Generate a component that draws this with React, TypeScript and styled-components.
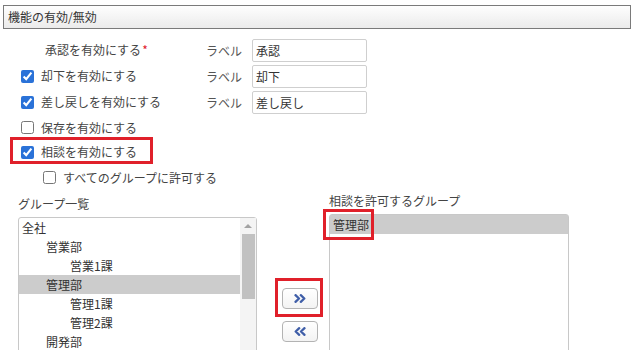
import React from 'react';
import styled, { createGlobalStyle } from 'styled-components';

const GlobalStyle = createGlobalStyle`
  html, body {
    margin: 0;
    padding: 0;
    overflow: hidden;
    background: #fff;
  }
  body {
    font-family: "Noto Sans CJK JP", "Noto Sans", sans-serif;
    font-size: 12px;
    color: #333;
  }
`;

const Page = styled.div`
  padding: 5px 1px 0 3px;
`;

const SectionHeader = styled.div`
  height: 24px;
  box-sizing: border-box;
  border: 1px solid #7a7a7a;
  background: linear-gradient(#fefefe, #ebebeb);
  padding-left: 4px;
  line-height: 22px;
  color: #333;
`;

const Form = styled.div`
  margin-top: 8px;
`;

const Row = styled.div<{ $h: number }>`
  display: flex;
  align-items: center;
  height: ${({ $h }) => $h}px;
`;

const Lead = styled.label<{ $pad: number; $wide?: boolean }>`
  display: flex;
  align-items: center;
  gap: 7px;
  width: ${({ $wide }) => ($wide ? 'auto' : '203px')};
  box-sizing: border-box;
  padding-left: ${({ $pad }) => $pad}px;
  line-height: 16px;
  color: #444;
`;

const Required = styled.span`
  color: #e0202a;
  margin-left: 1px;
`;

const Check = styled.input.attrs({ type: 'checkbox' })`
  margin: 0;
  width: 13px;
  height: 13px;
  accent-color: #2a72d8;
`;

const FieldLabel = styled.span`
  width: 46px;
  color: #555;
`;

const TextInput = styled.input`
  width: 115px;
  height: 23px;
  box-sizing: border-box;
  border: 1px solid #cfcfcf;
  border-radius: 2px;
  padding: 0 3px;
  font: inherit;
  color: #333;
  outline: none;
`;

const RowMark = styled.span`
  display: inline-flex;
  align-items: center;
  gap: 7px;
  height: 27px;
  box-sizing: border-box;
  border: 3px solid #e0202a;
  padding: 4px 13px 0 8px;
  margin: -3px 0 2px 7px;
  line-height: 16px;
  color: #444;
`;

const Groups = styled.div`
  display: grid;
  grid-template-columns: 239px 72px 240px;
  margin-top: 5px;
  padding-left: 15px;
`;

const Column = styled.div<{ $shift?: number }>`
  display: flex;
  flex-direction: column;
  margin-top: ${({ $shift }) => $shift ?? 0}px;
`;

const ColumnTitle = styled.div`
  line-height: 18px;
  height: 18px;
  margin-bottom: 4px;
  color: #444;
`;

const ListBox = styled.div<{ $scroll?: boolean }>`
  display: grid;
  grid-template-columns: ${({ $scroll }) => ($scroll ? '1fr 16px' : '1fr')};
  height: 150px;
  border: 1px solid #c8c8c8;
  border-radius: 3px 3px 0 0;
  background: #fff;
`;

const Items = styled.div`
  display: flex;
  flex-direction: column;
`;

const Item = styled.div<{ $level?: number; $selected?: boolean }>`
  height: 19px;
  line-height: 19px;
  padding-left: ${({ $level }) => 3 + ($level ?? 0) * 24}px;
  background: ${({ $selected }) => ($selected ? '#cccccc' : 'transparent')};
  color: #333;
  white-space: nowrap;
`;

const ItemMark = styled.span`
  display: inline-block;
  outline: 3px solid #e0202a;
  padding: 3px 2px 3px 7px;
  margin: -3px -2px -3px -7px;
  line-height: 19px;
`;

const ScrollBar = styled.div`
  display: flex;
  flex-direction: column;
  align-items: center;
  background: #f4f4f4;
`;

const ScrollArrow = styled.div`
  height: 16px;
  width: 100%;
  display: flex;
  align-items: center;
  justify-content: center;
  &::before {
    content: '';
    border-left: 4px solid transparent;
    border-right: 4px solid transparent;
    border-bottom: 4px solid #a3a3a3;
  }
`;

const ScrollThumb = styled.div`
  width: 13px;
  height: 65px;
  background: #c1c1c1;
`;

const Mover = styled.div`
  display: flex;
  flex-direction: column;
  align-items: flex-start;
  padding: 83px 0 0 18px;
`;

const ButtonMark = styled.span`
  display: inline-block;
  border: 3px solid #e0202a;
  padding: 7px 2px 5px 4px;
`;

const ArrowButton = styled.button<{ $gap?: number }>`
  display: flex;
  align-items: center;
  justify-content: center;
  width: 36px;
  height: 21px;
  margin: ${({ $gap }) => ($gap ? `${$gap}px 0 0 7px` : '0')};
  padding: 0;
  box-sizing: border-box;
  border: 1px solid #b3b3b3;
  border-radius: 4px;
  background: linear-gradient(#ffffff, #f3f3f3);
`;

const Chevrons = ({ left }: { left?: boolean }) => (
  <svg width="12" height="9" viewBox="0 0 12 9" style={{ transform: left ? 'scaleX(-1)' : undefined }}>
    <path
      d="M1.5 1.2 L5 4.5 L1.5 7.8 M6.8 1.2 L10.3 4.5 L6.8 7.8"
      fill="none"
      stroke="#3f5ea8"
      strokeWidth="2.3"
      strokeLinecap="round"
      strokeLinejoin="round"
    />
  </svg>
);

const groups = [
  { name: '全社', level: 0 },
  { name: '営業部', level: 1 },
  { name: '営業1課', level: 2 },
  { name: '管理部', level: 1, selected: true },
  { name: '管理1課', level: 2 },
  { name: '管理2課', level: 2 },
  { name: '開発部', level: 1 },
];

const options = [
  { title: '却下を有効にする', label: '却下' },
  { title: '差し戻しを有効にする', label: '差し戻し' },
];

export default function App() {
  return (
    <React.Fragment>
      <GlobalStyle />
      <Page>
        <SectionHeader>機能の有効/無効</SectionHeader>
        <Form>
          <Row $h={26}>
            <Lead $pad={42}>
              <span>
                承認を有効にする<Required>*</Required>
              </span>
            </Lead>
            <FieldLabel>ラベル</FieldLabel>
            <TextInput defaultValue="承認" />
          </Row>
          {options.map(o => (
            <Row $h={26} key={o.title}>
              <Lead $pad={18}>
                <Check defaultChecked />
                {o.title}
              </Lead>
              <FieldLabel>ラベル</FieldLabel>
              <TextInput defaultValue={o.label} />
            </Row>
          ))}
          <Row $h={25}>
            <Lead $pad={18}>
              <Check />
              保存を有効にする
            </Lead>
          </Row>
          <Row $h={25}>
            <RowMark>
              <Check defaultChecked />
              相談を有効にする
            </RowMark>
          </Row>
          <Row $h={25}>
            <Lead $pad={40} $wide>
              <Check />
              すべてのグループに許可する
            </Lead>
          </Row>
        </Form>
        <Groups>
          <Column>
            <ColumnTitle>グループ一覧</ColumnTitle>
            <ListBox $scroll>
              <Items>
                {groups.map(g => (
                  <Item key={g.name} $level={g.level} $selected={g.selected}>
                    {g.name}
                  </Item>
                ))}
              </Items>
              <ScrollBar>
                <ScrollArrow />
                <ScrollThumb />
              </ScrollBar>
            </ListBox>
          </Column>
          <Mover>
            <ButtonMark>
              <ArrowButton>
                <Chevrons />
              </ArrowButton>
            </ButtonMark>
            <ArrowButton $gap={4}>
              <Chevrons left />
            </ArrowButton>
          </Mover>
          <Column $shift={-3}>
            <ColumnTitle>相談を許可するグループ</ColumnTitle>
            <ListBox>
              <Items>
                <Item $selected>
                  <ItemMark>管理部</ItemMark>
                </Item>
              </Items>
            </ListBox>
          </Column>
        </Groups>
      </Page>
    </React.Fragment>
  );
}
